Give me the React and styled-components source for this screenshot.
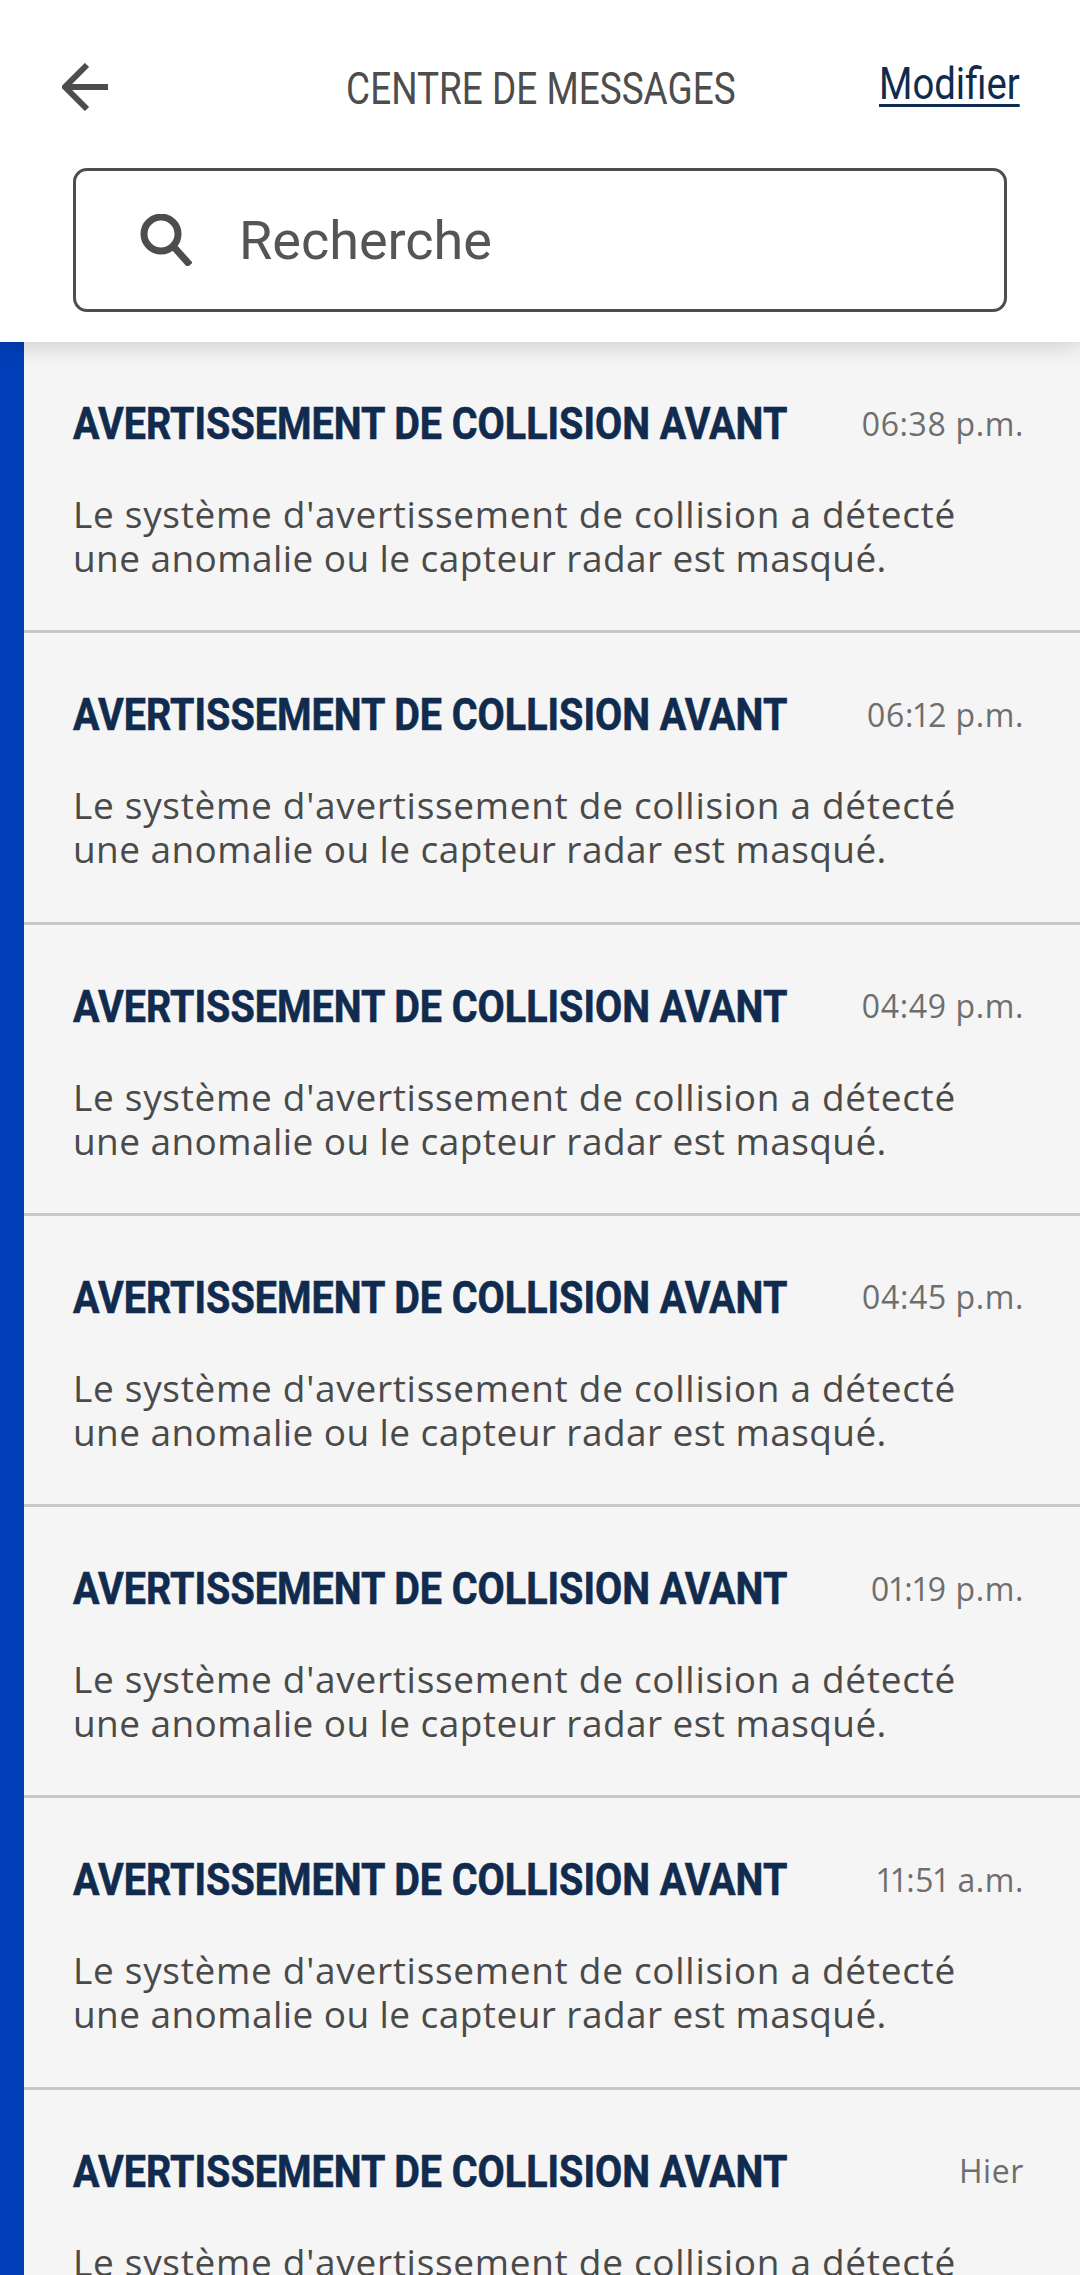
import React from "react";
import styled, { createGlobalStyle } from "styled-components";

const GlobalStyle = createGlobalStyle`
  html, body {
    margin: 0;
    padding: 0;
    background: #f5f5f5;
  }
`;

const Page = styled.div`
  width: 1080px;
  height: 2275px;
  overflow: hidden;
  background: #f5f5f5;
  font-family: "Roboto", "Liberation Sans", sans-serif;
`;

const Header = styled.header`
  position: relative;
  z-index: 1;
  height: 342px;
  box-sizing: border-box;
  padding-top: 60px;
  background: #fff;
  box-shadow: 0 4px 22px rgba(0, 0, 0, 0.16);
`;

const TopBar = styled.div`
  display: grid;
  grid-template-columns: 1fr auto 1fr;
  align-items: center;
  height: 48px;
  padding: 0 60px 0 62px;
`;

const BackButton = styled.div`
  display: flex;
  align-items: center;
`;

const Title = styled.h1`
  margin: 5px 0 0;
  font-size: 44px;
  line-height: 48px;
  font-weight: 400;
  color: #4d4d4d;
  white-space: nowrap;
  transform: scaleX(0.84);
`;

const EditLink = styled.a`
  justify-self: end;
  margin-top: -6px;
  font-size: 44px;
  line-height: 48px;
  color: #102b4e;
  text-decoration: underline;
  text-decoration-thickness: 3px;
  text-underline-offset: 5px;
  transform: scaleX(0.87);
  transform-origin: right center;
`;

const SearchBox = styled.div`
  display: flex;
  align-items: center;
  gap: 47px;
  box-sizing: border-box;
  width: 934px;
  height: 144px;
  margin: 60px 0 0 73px;
  padding-left: 64px;
  border: 3px solid #4d4d4d;
  border-radius: 14px;
`;

const SearchLabel = styled.span`
  font-size: 54px;
  color: #555;
`;

const List = styled.main`
  border-left: 24px solid #003fb8;
`;

const Row = styled.article`
  box-sizing: border-box;
  height: 291.3px;
  padding: 54px 56px 0 49px;
  border-bottom: 3px solid #c8c8c8;
`;

const RowHead = styled.div`
  display: flex;
  align-items: center;
  height: 56px;
`;

const RowTitle = styled.h2`
  flex: 1 1 0;
  min-width: 0;
  margin: 0;
  font-size: 45px;
  line-height: 56px;
  font-weight: 700;
  color: #102b4e;
  white-space: nowrap;
  -webkit-text-stroke: 0.6px #102b4e;
  transform: scaleX(0.877);
  transform-origin: left center;
`;

const RowTime = styled.span`
  margin-top: -2px;
  font-family: "Open Sans", sans-serif;
  font-size: 32px;
  font-variant-numeric: proportional-nums;
  letter-spacing: 0.6px;
  color: #6e6e6e;
  white-space: nowrap;
`;

const RowBody = styled.p`
  margin: 40px 0 0;
  font-family: "Open Sans", sans-serif;
  font-size: 37px;
  line-height: 44px;
  color: #4a4a4a;
  white-space: nowrap;
`;

const BodyLine = styled.span`
  display: block;
  letter-spacing: ${(props) => props.$spacing}px;
`;

const times = ["06:38 p.m.", "06:12 p.m.", "04:49 p.m.", "04:45 p.m.", "01:19 p.m.", "11:51 a.m.", "Hier"];

const BackIcon = () => (
  <svg width="46" height="48" viewBox="0 0 46 48" fill="none" stroke="#4d4d4d" strokeWidth="6">
    <path d="M46 24H4M25 2L3 24l22 22" />
  </svg>
);

const SearchIcon = () => (
  <svg width="52" height="52" viewBox="0 0 52 52" fill="none" stroke="#4d4d4d" strokeWidth="7">
    <circle cx="21" cy="20" r="17" />
    <path d="M33 32l17 19" />
  </svg>
);

export default function App() {
  return (
    <Page>
      <GlobalStyle />
      <Header>
        <TopBar>
          <BackButton>
            <BackIcon />
          </BackButton>
          <Title>CENTRE DE MESSAGES</Title>
          <EditLink>Modifier</EditLink>
        </TopBar>
        <SearchBox>
          <SearchIcon />
          <SearchLabel>Recherche</SearchLabel>
        </SearchBox>
      </Header>
      <List>
        {times.map((time) => (
          <Row key={time}>
            <RowHead>
              <RowTitle>AVERTISSEMENT DE COLLISION AVANT</RowTitle>
              <RowTime>{time}</RowTime>
            </RowHead>
            <RowBody>
              <BodyLine $spacing={0.7}>Le système d'avertissement de collision a détecté</BodyLine>
              <BodyLine $spacing={0.43}>une anomalie ou le capteur radar est masqué.</BodyLine>
            </RowBody>
          </Row>
        ))}
      </List>
    </Page>
  );
}
